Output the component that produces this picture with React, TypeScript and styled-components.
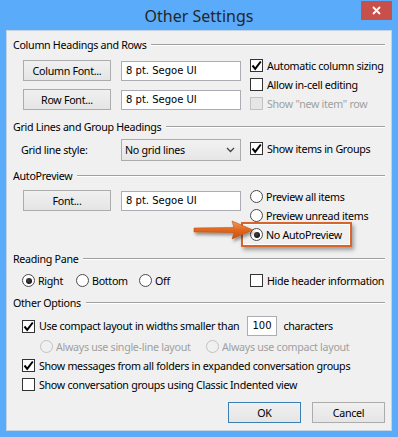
import React from "react";
import styled, { createGlobalStyle, css } from "styled-components";

const GlobalStyle = createGlobalStyle`
  html, body {
    margin: 0;
    padding: 0;
    background: #5aacfb;
  }
  body {
    font-family: "Noto Sans", "Open Sans", sans-serif;
    font-size: 10.7px;
    letter-spacing: -0.3px;
    color: #000;
  }
`;

const Window = styled.div`
  width: 398px;
  height: 437px;
  background: #5aacfb;
  display: flex;
  flex-direction: column;
  box-sizing: border-box;
`;

const TitleBar = styled.div`
  height: 30px;
  display: grid;
  grid-template-columns: 1fr auto 1fr;
  align-items: start;
`;

const Title = styled.div`
  grid-column: 2;
  font-size: 16px;
  letter-spacing: 0;
  line-height: 20px;
  margin-top: 6px;
  color: #262626;
`;

const CloseButton = styled.div`
  grid-column: 3;
  justify-self: end;
  width: 31px;
  height: 19px;
  margin: 1px 6px 0 0;
  background: #c8504a;
  display: flex;
  align-items: center;
  justify-content: center;
`;

const Panel = styled.div`
  margin: 0 6px 6px 6px;
  height: 401px;
  box-sizing: border-box;
  border: 1px solid #c4d3e2;
  background: #f0f0f0;
  padding: 0 6px;
`;

const Section = styled.div<{ $top: number }>`
  position: relative;
  margin-top: ${(p) => p.$top}px;
`;

const Header = styled.div`
  display: flex;
  align-items: center;
  height: 16px;
  line-height: 16px;
  white-space: nowrap;
  &::after {
    content: "";
    flex: 1;
    margin-left: 5px;
    border-top: 1px solid #a0a0a0;
    border-bottom: 1px solid #ffffff;
  }
`;

const Body = styled.div<{ $top: number; $indent?: number }>`
  display: flex;
  align-items: flex-start;
  margin-top: ${(p) => p.$top}px;
  padding-left: ${(p) => p.$indent ?? 0}px;
`;

const FontGrid = styled.div`
  display: grid;
  grid-template-columns: 88px 120px;
  column-gap: 10px;
  row-gap: 8px;
  margin-left: 10px;
  align-items: center;
`;

const PushButton = styled.button<{ $default?: boolean; $width?: number }>`
  width: ${(p) => p.$width ?? 88}px;
  height: 21px;
  box-sizing: border-box;
  padding: 0;
  border: 1px solid ${(p) => (p.$default ? "#3c7fb1" : "#acacac")};
  background: linear-gradient(#f0f0f0, #e5e5e5);
  font-family: inherit;
  font-size: 10.7px;
  letter-spacing: -0.3px;
  color: #000;
  line-height: 18px;
`;

const TextBox = styled.div<{ $width?: number; $left?: number }>`
  width: ${(p) => p.$width ?? 120}px;
  height: 20px;
  flex: none;
  box-sizing: border-box;
  margin-left: ${(p) => p.$left ?? 0}px;
  border: 1px solid #abadb3;
  background: #fff;
  padding-left: 4px;
  line-height: 18px;
  font-family: "DejaVu Sans", "Noto Sans", sans-serif;
  font-size: 10px;
  letter-spacing: 0;
`;

const OptionStack = styled.div<{ $top?: number; $left?: number }>`
  display: flex;
  flex-direction: column;
  margin-top: ${(p) => p.$top ?? 0}px;
  margin-left: ${(p) => p.$left ?? 9}px;
`;

const OptionRow = styled.label<{ $disabled?: boolean; $width?: number; $indent?: number }>`
  display: flex;
  flex: none;
  align-items: center;
  height: 19px;
  white-space: nowrap;
  padding-left: ${(p) => p.$indent ?? 0}px;
  color: ${(p) => (p.$disabled ? "#a0a0a0" : "#000")};
  ${(p) =>
    p.$width &&
    css`
      width: ${p.$width}px;
    `}
`;

const Box = styled.span<{ $disabled?: boolean }>`
  width: 13px;
  height: 13px;
  box-sizing: border-box;
  flex: none;
  border: 1px solid ${(p) => (p.$disabled ? "#c2c2c2" : "#333")};
  background: ${(p) => (p.$disabled ? "#e6e6e6" : "#fff")};
  margin-right: 4px;
  display: flex;
  align-items: center;
  justify-content: center;
`;

const Circle = styled.span<{ $disabled?: boolean }>`
  width: 13px;
  height: 13px;
  box-sizing: border-box;
  flex: none;
  border-radius: 50%;
  border: 1px solid ${(p) => (p.$disabled ? "#c2c2c2" : "#4a4a4a")};
  background: ${(p) => (p.$disabled ? "#f0f0f0" : "#fff")};
  margin-right: 3px;
  display: flex;
  align-items: center;
  justify-content: center;
`;

const Dot = styled.span`
  width: 6px;
  height: 6px;
  border-radius: 50%;
  background: radial-gradient(circle at 40% 40%, #444, #000);
`;

const Select = styled.div`
  width: 120px;
  height: 22px;
  flex: none;
  box-sizing: border-box;
  border: 1px solid #acacac;
  background: linear-gradient(#f2f2f2, #e6e6e6);
  display: flex;
  align-items: center;
  justify-content: space-between;
  padding: 0 5px 0 3px;
`;

const Label = styled.div<{ $width: number }>`
  width: ${(p) => p.$width}px;
  flex: none;
  line-height: 22px;
`;

const Highlight = styled.div`
  position: relative;
  &::before {
    content: "";
    position: absolute;
    left: -9px;
    top: -3px;
    width: 111px;
    height: 25px;
    box-sizing: border-box;
    border: 2px solid #d8652b;
    box-shadow: 2px 3px 4px rgba(0, 0, 0, 0.35), inset 0 0 0 1px #ffffff;
    pointer-events: none;
  }
`;

const Arrow = styled.svg`
  position: absolute;
  left: 168px;
  top: 49px;
`;

const InlineRow = styled.div<{ $top: number; $indent?: number }>`
  display: flex;
  align-items: center;
  margin-top: ${(p) => p.$top}px;
  padding-left: ${(p) => p.$indent ?? 0}px;
`;

const Tail = styled.span`
  margin-left: 6px;
`;

const Footer = styled.div`
  display: flex;
  justify-content: flex-end;
  gap: 11px;
  margin-top: 8px;
`;

const Check = () => (
  <svg width="11" height="11" viewBox="0 0 11 11">
    <path d="M1.5 5.5 L4.2 8.8 L9.8 1.5" fill="none" stroke="#000" strokeWidth="2" />
  </svg>
);

const CheckBox = ({
  label,
  checked,
  disabled,
  indent,
}: {
  label: string;
  checked?: boolean;
  disabled?: boolean;
  indent?: number;
}) => (
  <OptionRow $disabled={disabled} $indent={indent}>
    <Box $disabled={disabled}>{checked && <Check />}</Box>
    {label}
  </OptionRow>
);

const Radio = ({
  label,
  checked,
  disabled,
  width,
}: {
  label: string;
  checked?: boolean;
  disabled?: boolean;
  width?: number;
}) => (
  <OptionRow $disabled={disabled} $width={width}>
    <Circle $disabled={disabled}>{checked && <Dot />}</Circle>
    {label}
  </OptionRow>
);

export default function App() {
  return (
    <>
      <GlobalStyle />
      <Window>
        <TitleBar>
          <Title>Other Settings</Title>
          <CloseButton>
            <svg width="9" height="9" viewBox="0 0 9 9">
              <path d="M1 1 L8 8 M8 1 L1 8" stroke="#fff" strokeWidth="1.8" />
            </svg>
          </CloseButton>
        </TitleBar>
        <Panel>
          <Section $top={6}>
            <Header>Column Headings and Rows</Header>
            <Body $top={7}>
              <FontGrid>
                <PushButton>Column Font...</PushButton>
                <TextBox>8 pt. Segoe UI</TextBox>
                <PushButton>Row Font...</PushButton>
                <TextBox>8 pt. Segoe UI</TextBox>
              </FontGrid>
              <OptionStack $top={-4}>
                <CheckBox label="Automatic column sizing" checked />
                <CheckBox label="Allow in-cell editing" />
                <CheckBox label={'Show "new item" row'} disabled />
              </OptionStack>
            </Body>
          </Section>

          <Section $top={6}>
            <Header>Grid Lines and Group Headings</Header>
            <Body $top={4} $indent={8}>
              <Label $width={100}>Grid line style:</Label>
              <Select>
                <span>No grid lines</span>
                <svg width="9" height="6" viewBox="0 0 9 6">
                  <path d="M1 1 L4.5 4.5 L8 1" fill="none" stroke="#444" strokeWidth="1.3" />
                </svg>
              </Select>
              <OptionStack>
                <CheckBox label="Show items in Groups" checked />
              </OptionStack>
            </Body>
          </Section>

          <Section $top={7}>
            <Header>AutoPreview</Header>
            <Body $top={6}>
              <FontGrid>
                <PushButton>Font...</PushButton>
                <TextBox>8 pt. Segoe UI</TextBox>
              </FontGrid>
              <OptionStack $top={-3}>
                <Radio label="Preview all items" />
                <Radio label="Preview unread items" />
                <Highlight>
                  <Radio label="No AutoPreview" checked />
                </Highlight>
              </OptionStack>
            </Body>
            <Arrow width="80" height="30" viewBox="0 0 80 30">
              <defs>
                <linearGradient id="arrowFill" x1="0" y1="0" x2="0" y2="1">
                  <stop offset="0" stopColor="#f39a5e" />
                  <stop offset="0.5" stopColor="#e2661f" />
                  <stop offset="1" stopColor="#c8520f" />
                </linearGradient>
                <filter id="arrowShadow" x="-20%" y="-40%" width="150%" height="200%">
                  <feDropShadow dx="1.5" dy="2.5" stdDeviation="1.5" floodColor="#000" floodOpacity="0.4" />
                </filter>
              </defs>
              <path
                d="M13 11 L53 10.5 L51 4 L72 13 L51 22 L53 15.5 L13 15 Z"
                fill="url(#arrowFill)"
                stroke="#b8500f"
                strokeWidth="0.6"
                filter="url(#arrowShadow)"
              />
            </Arrow>
          </Section>

          <Section $top={7}>
            <Header>Reading Pane</Header>
            <Body $top={4}>
              <OptionStack $left={9}>
                <InlineRow $top={0}>
                  <Radio label="Right" checked width={54} />
                  <Radio label="Bottom" width={63} />
                  <Radio label="Off" width={111} />
                  <CheckBox label="Hide header information" />
                </InlineRow>
              </OptionStack>
            </Body>
          </Section>

          <Section $top={5}>
            <Header>Other Options</Header>
            <InlineRow $top={5} $indent={9}>
              <CheckBox label="Use compact layout in widths smaller than" checked />
              <TextBox $width={30} $left={8}>
                100
              </TextBox>
              <Tail>characters</Tail>
            </InlineRow>
            <InlineRow $top={1} $indent={27}>
              <Radio label="Always use single-line layout" disabled width={166} />
              <Radio label="Always use compact layout" disabled />
            </InlineRow>
            <OptionStack $left={9}>
              <CheckBox label="Show messages from all folders in expanded conversation groups" checked />
              <CheckBox label="Show conversation groups using Classic Indented view" />
            </OptionStack>
            <Footer>
              <PushButton $default $width={73}>
                OK
              </PushButton>
              <PushButton $width={73}>Cancel</PushButton>
            </Footer>
          </Section>
        </Panel>
      </Window>
    </>
  );
}
